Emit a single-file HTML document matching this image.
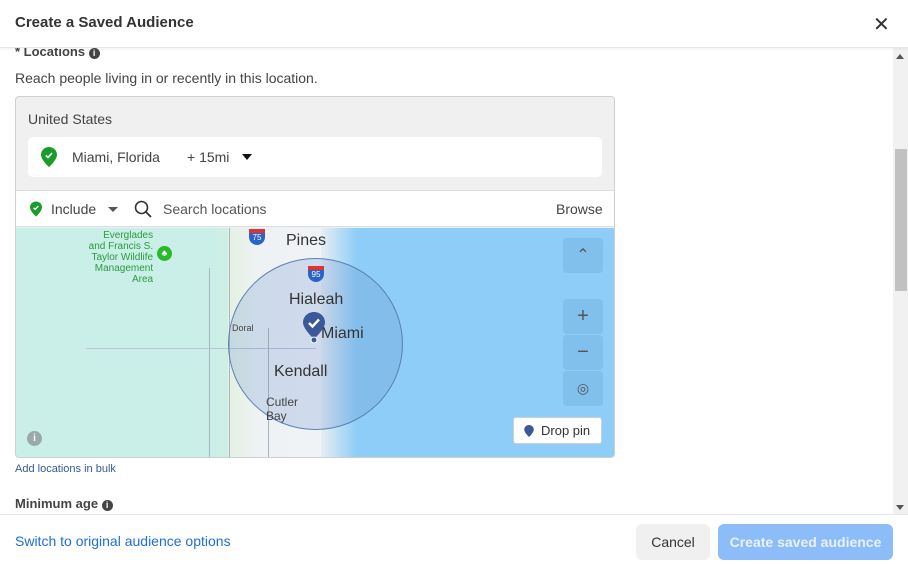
<!DOCTYPE html>
<html><head><meta charset="utf-8"><style>
*{box-sizing:border-box;margin:0;padding:0}
body{width:908px;height:564px;overflow:hidden;background:#fff;font-family:"Liberation Sans",sans-serif;color:#1c1e21;position:relative}
.hdr{position:absolute;left:0;top:0;width:908px;height:48px;border-bottom:1px solid #e4e6eb;box-shadow:0 1px 3px rgba(0,0,0,.06);background:#fff;z-index:3}
.hdr h1{position:absolute;left:15px;top:14px;font-size:15px;font-weight:bold;color:#333}
.x{position:absolute;left:873px;top:12px;font-size:20px;color:#333}
.sb{position:absolute;left:893px;top:48px;width:15px;height:466px;background:#f1f1f1}
.thumb{position:absolute;left:895px;top:149px;width:12px;height:142px;background:#c1c1c1}
.t{position:absolute;white-space:nowrap}
.box{position:absolute;left:15px;top:96px;width:600px;height:362px;border:1px solid #ccd0d5;border-radius:4px;background:#f0f0f0;overflow:hidden}
.foot{position:absolute;left:0;top:514px;width:908px;height:50px;border-top:1px solid #e4e6eb;background:#fff}
.btn{position:absolute;border-radius:6px;font-size:14px;text-align:center;line-height:36px}
.ctrl{position:absolute;left:547px;width:40px;background:rgba(120,180,230,.55);border-radius:4px;color:#555;text-align:center;font-size:20px}
.road{position:absolute;background:#a9b3c2}
</style></head><body>
<div class="hdr"><h1>Create a Saved Audience</h1><div class="x">✕</div></div>
<div class="t" style="left:15px;top:44px;font-size:13px;font-weight:bold;color:#444">* Locations <span style="display:inline-block;width:11px;height:11px;border-radius:50%;background:#444;color:#fff;font-size:9px;text-align:center;line-height:11px;vertical-align:0">i</span></div>
<div class="t" style="left:15px;top:70px;font-size:14px;color:#444">Reach people living in or recently in this location.</div>
<div class="box">
 <div class="t" style="left:12px;top:14px;font-size:14px;color:#444">United States</div>
 <div style="position:absolute;left:12px;top:40px;width:574px;height:40px;background:#fff;border-radius:5px">
  <svg style="position:absolute;left:13px;top:10px" width="16" height="20" viewBox="0 0 16 20"><path d="M8 0C3.6 0 0 3.4 0 7.6 0 13 8 20 8 20s8-7 8-12.4C16 3.4 12.4 0 8 0z" fill="#1a9c2c"/><path d="M4.8 8.5l2.2 2 4-4.4" stroke="#fff" stroke-width="1.6" fill="none"/></svg>
  <div class="t" style="left:44px;top:12px;font-size:14px;color:#444">Miami, Florida</div>
  <div class="t" style="left:159px;top:12px;font-size:14px;color:#444">+ 15mi</div>
  <div style="position:absolute;left:214px;top:17px;border-left:5px solid transparent;border-right:5px solid transparent;border-top:6px solid #111"></div>
 </div>
 <div style="position:absolute;left:0;top:93px;width:600px;height:37px;background:#fff;border-top:1px solid #dadde1;border-bottom:1px solid #dadde1">
  <svg style="position:absolute;left:14px;top:10px" width="12" height="16" viewBox="0 0 16 20"><path d="M8 0C3.6 0 0 3.4 0 7.6 0 13 8 20 8 20s8-7 8-12.4C16 3.4 12.4 0 8 0z" fill="#1a9c2c"/><path d="M4.8 8.5l2.2 2 4-4.4" stroke="#fff" stroke-width="1.8" fill="none"/></svg>
  <div class="t" style="left:35px;top:10px;font-size:14px;color:#444">Include</div>
  <div style="position:absolute;left:92px;top:16px;border-left:5px solid transparent;border-right:5px solid transparent;border-top:5px solid #555"></div>
  <svg style="position:absolute;left:118px;top:9px" width="18" height="18" viewBox="0 0 18 18"><circle cx="7.5" cy="7.5" r="6" stroke="#333" stroke-width="1.6" fill="none"/><path d="M12 12l5 5" stroke="#333" stroke-width="1.8"/></svg>
  <div class="t" style="left:147px;top:10px;font-size:14px;color:#555">Search locations</div>
  <div class="t" style="left:540px;top:10px;font-size:14px;color:#444">Browse</div>
 </div>
 <div style="position:absolute;left:0;top:131px;width:600px;height:231px;overflow:hidden;background:#8dcdf7">
  <div style="position:absolute;left:0;top:0;width:215px;height:231px;background:#c9efe8"></div>
  <div style="position:absolute;left:195px;top:0;width:40px;height:231px;background:linear-gradient(90deg,#c9efe8,#d8efdc)"></div>
  <div style="position:absolute;left:212px;top:0;width:100px;height:231px;background:linear-gradient(90deg,#e3f1e2 0,#eef2f4 30%,#f1f3f6 100%)"></div>
  <div style="position:absolute;left:305px;top:0;width:60px;height:231px;background:linear-gradient(90deg,#e8eef3,#8dcdf7 60%)"></div>
  <div class="road" style="left:193px;top:40px;width:1px;height:191px"></div>
  <div class="road" style="left:213px;top:0;width:1px;height:231px"></div>
  <div class="road" style="left:70px;top:120px;width:230px;height:1px;background:#b9c4d6"></div>
  <div class="road" style="left:252px;top:100px;width:1px;height:131px"></div>
  <div style="position:absolute;left:212px;top:30px;width:175px;height:172px;border-radius:50%;background:rgba(90,130,200,.22);border:1px solid #5a7fb5"></div>
  <div class="t" style="left:68px;top:2px;font-size:10px;color:#2a9d3a;text-align:right;line-height:11px">Everglades<br>and Francis S.<br>Taylor Wildlife<br>Management<br><span style="padding-left:48px">Area</span></div>
  <div style="position:absolute;left:141px;top:18px;width:15px;height:15px;border-radius:50%;background:#2ab92a;color:#fff;font-size:9px;text-align:center;line-height:15px">♣</div>
  <div class="t" style="left:270px;top:4px;font-size:16px;color:#333">Pines</div>
  <div class="t" style="left:273px;top:63px;font-size:16px;color:#333">Hialeah</div>
  <div class="t" style="left:305px;top:97px;font-size:16px;color:#333">Miami</div>
  <div class="t" style="left:258px;top:135px;font-size:16px;color:#333">Kendall</div>
  <div class="t" style="left:250px;top:167px;font-size:12px;color:#444;line-height:14px">Cutler<br>Bay</div>
  <div class="t" style="left:216px;top:95px;font-size:9px;color:#444">Doral</div>
  <div style="position:absolute;left:233px;top:1px;width:16px;height:16px;background:#2c64c6;border-top:4px solid #d33;border-radius:0 0 8px 8px;color:#fff;font-size:8px;text-align:center">75</div>
  <div style="position:absolute;left:292px;top:38px;width:16px;height:16px;background:#2c64c6;border-top:4px solid #d33;border-radius:0 0 8px 8px;color:#fff;font-size:8px;text-align:center">95</div>
  <svg style="position:absolute;left:287px;top:84px" width="22" height="32" viewBox="0 0 22 32"><path d="M11 0C5 0 0 4.5 0 10.5 0 17 11 27 11 27S22 17 22 10.5C22 4.5 17 0 11 0z" fill="#3b5998"/><path d="M6 11l3.5 3.5L16 7.5" stroke="#fff" stroke-width="2.4" fill="none"/><circle cx="11" cy="28" r="3" fill="#3b5998" stroke="#fff"/></svg>
  <div style="position:absolute;left:11px;top:203px;width:15px;height:15px;border-radius:50%;background:#9aa;color:#fff;font-size:10px;text-align:center;line-height:15px;font-weight:bold">i</div>
  <div class="ctrl" style="top:10px;height:35px;font-size:16px;line-height:35px">⌃</div>
  <div class="ctrl" style="top:71px;height:35px;line-height:35px">+</div>
  <div class="ctrl" style="top:107px;height:35px;line-height:35px">−</div>
  <div class="ctrl" style="top:143px;height:35px;line-height:35px;font-size:14px">◎</div>
  <div style="position:absolute;left:497px;top:189px;width:89px;height:27px;background:#fff;border:1px solid #ccd0d5;border-radius:3px;font-size:13px;color:#333;line-height:25px;padding-left:27px">Drop pin
   <svg style="position:absolute;left:10px;top:7px" width="10" height="12" viewBox="0 0 16 20"><path d="M8 0C3.6 0 0 3.4 0 7.6 0 13 8 20 8 20s8-7 8-12.4C16 3.4 12.4 0 8 0z" fill="#3b5998"/></svg></div>
 </div>
</div>
<div class="t" style="left:15px;top:463px;font-size:11px;color:#385898">Add locations in bulk</div>
<div class="t" style="left:15px;top:496px;font-size:13px;font-weight:bold;color:#444">Minimum age <span style="display:inline-block;width:11px;height:11px;border-radius:50%;background:#444;color:#fff;font-size:9px;text-align:center;line-height:11px">i</span></div>
<div class="sb"></div><div class="thumb"></div>
<div style="position:absolute;left:896px;top:54px;border-left:4px solid transparent;border-right:4px solid transparent;border-bottom:5px solid #555"></div>
<div style="position:absolute;left:896px;top:505px;border-left:4px solid transparent;border-right:4px solid transparent;border-top:5px solid #555"></div>
<div class="foot">
 <div class="t" style="left:15px;top:18px;font-size:14px;color:#1b6fd8">Switch to original audience options</div>
 <div class="btn" style="left:636px;top:9px;width:74px;height:36px;background:#f0f0f0;color:#333">Cancel</div>
 <div class="btn" style="left:718px;top:9px;width:175px;height:36px;background:#8dbdf8;color:#e8f1fd;font-weight:bold">Create saved audience</div>
</div>
</body></html>
